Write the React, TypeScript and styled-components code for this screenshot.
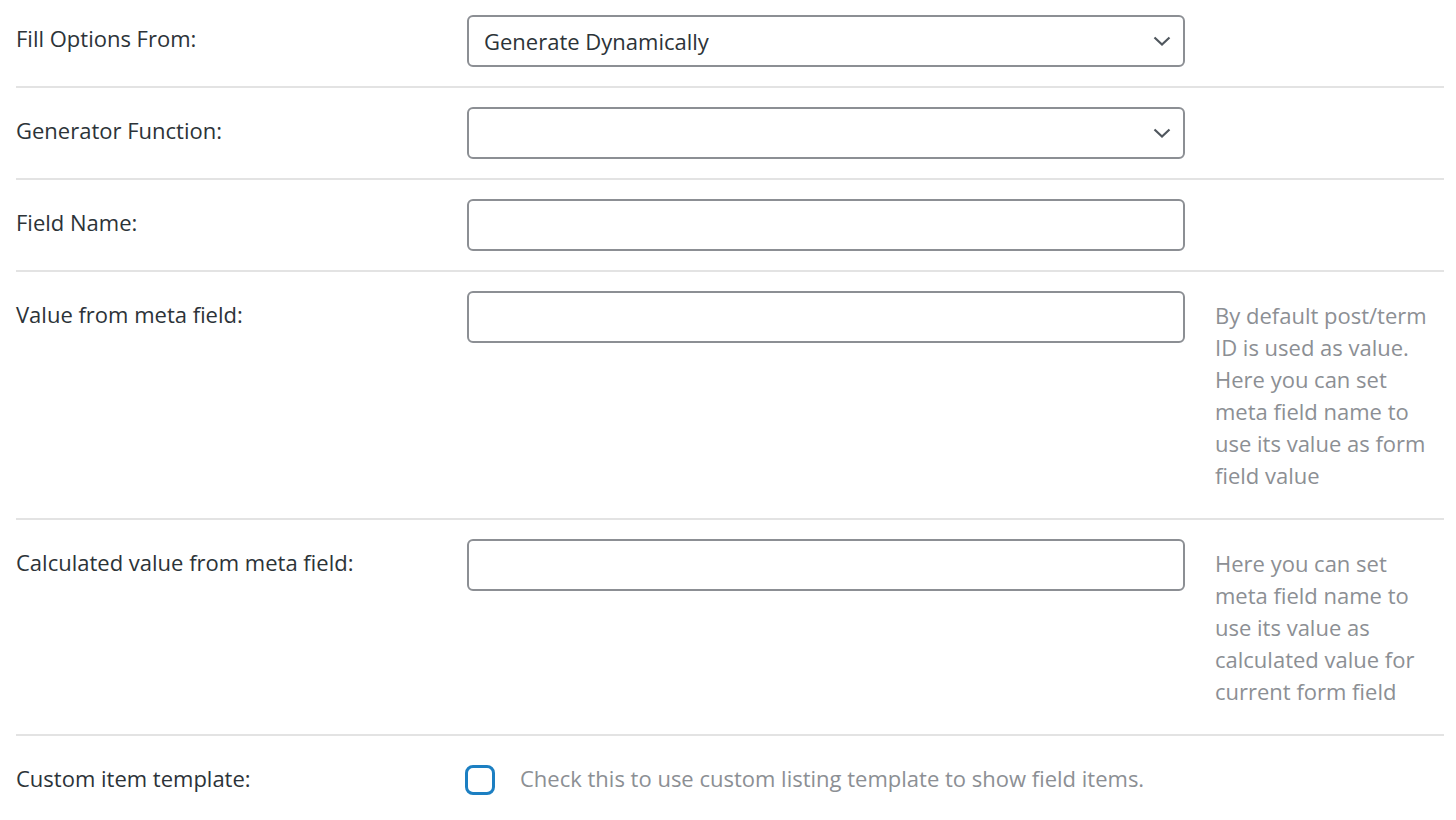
import React from "react";
import styled, { createGlobalStyle } from "styled-components";

const Global = createGlobalStyle`
  html, body { margin: 0; padding: 0; background: #ffffff; }
  body { font-family: "Open Sans", "Noto Sans", sans-serif; }
  * { box-sizing: border-box; }
`;

const Table = styled.div`
  padding-left: 16px;
  width: 1444px;
  margin-top: -4px;
`;

const Row = styled.div<{ $last?: boolean }>`
  display: grid;
  grid-template-columns: 451px 718px 1fr;
  align-items: start;
  border-bottom: ${(p) => (p.$last ? "none" : "2px solid #e3e3e3")};
`;

const Label = styled.div`
  padding: 28px 10px 20px 0;
  font-size: 22px;
  line-height: 28px;
  color: #2c3338;
`;

const FieldCell = styled.div`
  padding: 19px 0 19px 0;
`;

const SelectBox = styled.div`
  position: relative;
  height: 52px;
  border: 2px solid #8c8f94;
  border-radius: 6px;
  display: flex;
  align-items: center;
  padding: 0 48px 0 15px;
  font-size: 22px;
  color: #2c3338;
  background: #fff;
`;

const Chevron = styled.svg`
  position: absolute;
  right: 12px;
  top: 50%;
  transform: translateY(-50%);
`;

const TextInput = styled.input`
  display: block;
  width: 100%;
  height: 52px;
  border: 2px solid #8c8f94;
  border-radius: 6px;
  background: #fff;
  padding: 0 15px;
  font: inherit;
  font-size: 22px;
  outline: none;
`;

const Desc = styled.div`
  padding: 27px 6px 27px 30px;
  font-size: 22px;
  line-height: 32px;
  color: #8c8f94;
`;

const CheckWrap = styled.label`
  grid-column: 2 / 4;
  display: flex;
  align-items: center;
  gap: 25px;
  padding: 29px 0 26px 0;
  margin-left: -2px;
  font-size: 22px;
  line-height: 28px;
  color: #8c8f94;
`;

const CheckText = styled.span`
  position: relative;
  top: -2px;
`;

const CheckBox = styled.span`
  width: 30px;
  height: 30px;
  flex: none;
  border: 3px solid #1c7fc2;
  border-radius: 8px;
  background: #fff;
`;

const ChevronIcon = () => (
  <Chevron width="18" height="10" viewBox="0 0 18 10">
    <path d="M1.5 1.5 L9 8.5 L16.5 1.5" fill="none" stroke="#50575e" strokeWidth="2.2" />
  </Chevron>
);

export default function App() {
  return (
    <>
      <Global />
      <Table>
        <Row>
          <Label>Fill Options From:</Label>
          <FieldCell>
            <SelectBox>
              Generate Dynamically
              <ChevronIcon />
            </SelectBox>
          </FieldCell>
        </Row>
        <Row>
          <Label>Generator Function:</Label>
          <FieldCell>
            <SelectBox>
              <ChevronIcon />
            </SelectBox>
          </FieldCell>
        </Row>
        <Row>
          <Label>Field Name:</Label>
          <FieldCell>
            <TextInput type="text" />
          </FieldCell>
        </Row>
        <Row>
          <Label>Value from meta field:</Label>
          <FieldCell>
            <TextInput type="text" />
          </FieldCell>
          <Desc>
            By default post/term ID is used as value. Here you can set meta field name to use its value as form field value
          </Desc>
        </Row>
        <Row>
          <Label>Calculated value from meta field:</Label>
          <FieldCell>
            <TextInput type="text" />
          </FieldCell>
          <Desc>
            Here you can set meta field name to use its value as calculated value for current form field
          </Desc>
        </Row>
        <Row $last>
          <Label>Custom item template:</Label>
          <CheckWrap>
            <CheckBox />
            <CheckText>Check this to use custom listing template to show field items.</CheckText>
          </CheckWrap>
        </Row>
      </Table>
    </>
  );
}
